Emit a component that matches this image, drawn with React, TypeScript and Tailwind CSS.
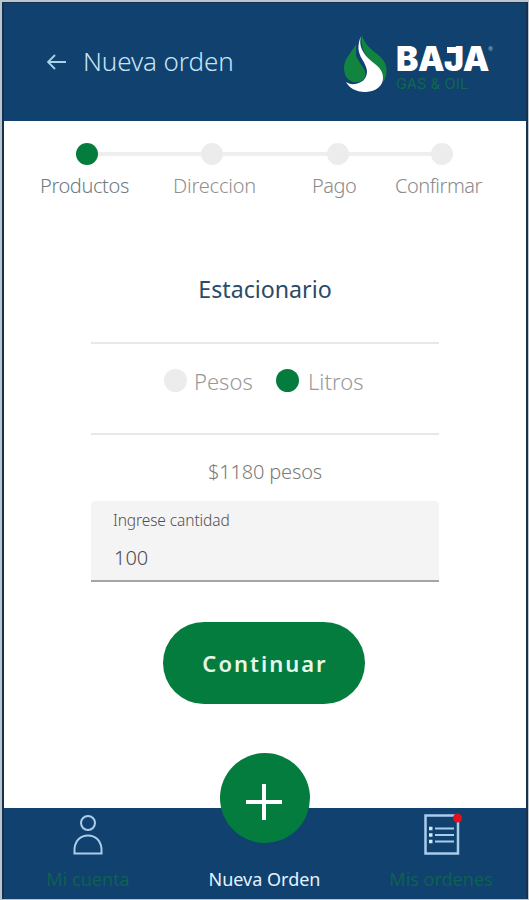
import { useState } from 'react'

type Unit = 'Pesos' | 'Litros'

const steps = [
  { label: 'Productos', labelClass: 'w-[90px] tracking-[-0.4px] text-[#6f7b83]' },
  { label: 'Direccion', labelClass: 'ml-[43px] w-[84px] tracking-[-0.2px] text-[#909090]' },
  { label: 'Pago', labelClass: 'ml-[55px] w-[46px] tracking-[-0.5px] text-[#8b8b8b]' },
  { label: 'Confirmar', labelClass: 'ml-[37px] w-[88px] tracking-[-0.5px] text-[#8b8b8b]' },
]

const units: { name: Unit; className: string }[] = [
  { name: 'Pesos', className: 'w-[112px] gap-[7px]' },
  { name: 'Litros', className: 'w-[92px] gap-[9px]' },
]

function Logo() {
  return (
    <div className="flex">
      <svg className="h-[58px] w-[44px]" fill="none" viewBox="0 0 44 58">
        <path d="M12 9C9 16 0 23 0 33c0 7 3 12 9 14 7 1 12-2 12.500-7C22 33 14 28 12 20Z" fill="#11853f" />
        <path d="M18 0c3 10 9 14 15 19 5 4 9 8 9.500 15 .3 6-1 10-3.500 13 0-12-8-16-14-23-5-6-9-14-7-24Z" fill="#11853f" />
        <path
          d="M17 1c-4 10-3 16 1 23 3 5 5 9 5 13-.5 8-6 11-12 12-4 .5-7-.5-9-2 3 6 11 10.500 20 10 10-.5 17-6 17-14 0-6-3-10-8-14-7-5-12-11-14-17-1-4-1-7 0-11Z"
          fill="#fff"
        />
      </svg>
      <div className="ml-[8px] pt-[6px]">
        <div className="relative h-[36px] w-[93px]">
          <span className="font-['Inter'] text-[33.5px] leading-[36px] font-black tracking-[-0.5px] text-white">
            BAJA
          </span>
          <span className="absolute top-[6px] left-[51px] h-[6px] w-[12px] bg-white" />
          <span className="absolute top-[3px] left-[92px] text-[6px] leading-[10px] text-[#9fc4dc]">®</span>
        </div>
        <div className="mt-[-1px] font-['Inter'] text-[14.5px] leading-[16px] tracking-[0.2px] text-[#11684c]">
          GAS &amp; OIL
        </div>
      </div>
    </div>
  )
}

function Stepper() {
  return (
    <div>
      <div className="flex items-center pt-[22px] pl-[72px]">
        <span className="size-[22px] rounded-full bg-[#047c3d]" />
        <span className="h-[4px] w-[103px] bg-[#efefef]" />
        <span className="size-[22px] rounded-full bg-[#ececec]" />
        <span className="h-[4px] w-[104px] bg-[#efefef]" />
        <span className="size-[22px] rounded-full bg-[#ececec]" />
        <span className="h-[4px] w-[82px] bg-[#efefef]" />
        <span className="size-[22px] rounded-full bg-[#ececec]" />
      </div>
      <div className="mt-[7px] flex pl-[36px] text-[20px] leading-[28px] font-light">
        {steps.map((step) => (
          <span className={`whitespace-nowrap ${step.labelClass}`} key={step.label}>
            {step.label}
          </span>
        ))}
      </div>
    </div>
  )
}

function BottomNav() {
  return (
    <nav className="relative flex h-[91px] bg-[#10416f] text-[18px] leading-[26px] whitespace-nowrap">
      <div className="flex w-[168px] flex-col items-center pt-[6px]">
        <svg className="h-[41px] w-[30px]" fill="none" stroke="#a9cdeb" strokeWidth="2" viewBox="0 0 30 41">
          <circle cx="15" cy="9" r="7" />
          <path d="M1.500 39.500h27v-5C27.500 26 22 21.500 15 21.500S2.500 26 1.500 34.500Z" />
        </svg>
        <span className="mt-[11px] text-[#0d6250]">Mi cuenta</span>
      </div>
      <div className="flex w-[185px] flex-col items-center pt-[58px]">
        <button
          aria-label="Nueva Orden"
          className="absolute -top-[55px] left-[216px] flex size-[90px] items-center justify-center rounded-full bg-[#047c3d]"
          type="button"
        >
          <svg className="mt-[7px] mr-[2px] size-[36px]" stroke="#fff" strokeWidth="4" viewBox="0 0 36 36">
            <path d="M18 0v36M0 18h36" />
          </svg>
        </button>
        <span className="text-[#e4f3ff]">Nueva Orden</span>
      </div>
      <div className="flex w-[168px] flex-col items-center pt-[5px]">
        <svg className="ml-[4px] h-[43px] w-[40px]" fill="none" viewBox="0 0 40 43">
          <rect height="38" stroke="#a9cdeb" strokeWidth="2.500" width="32.500" x="2.500" y="2.500" />
          <path d="M12 15.500h19M12 22h19M12 28.500h19" stroke="#a9cdeb" strokeWidth="2.200" />
          <path d="M6 15.500h3.500M6 22h3.500M6 28.500h3.500" stroke="#d5e9f8" strokeWidth="3.500" />
          <circle cx="34.500" cy="5" fill="#e3101c" r="4.500" />
        </svg>
        <span className="mt-[10px] text-[#0d6250]">Mis ordenes</span>
      </div>
    </nav>
  )
}

export default function App() {
  const [unit, setUnit] = useState<Unit>('Litros')
  const [amount, setAmount] = useState('100')

  return (
    <div className="h-[900px] w-[529px] bg-[#b9c6d0] pt-[2px] pr-px pb-px pl-[2px] font-['Noto_Sans',sans-serif]">
      <div className="flex h-full flex-col border-x-2 border-t border-[#16304d] bg-white">
        <header className="flex h-[118px] shrink-0 items-start bg-[#10416f] pl-[43px]">
          <svg
            className="mt-[49px] h-[20px] w-[20px]"
            fill="none"
            stroke="#a9d3e8"
            strokeWidth="1.800"
            viewBox="0 0 20 20"
          >
            <path d="M19 10H1M8 3l-7 7 7 7" />
          </svg>
          <h1 className="mt-[40px] ml-[16px] w-[150px] text-[26px] leading-[36px] font-light tracking-[-0.1px] whitespace-nowrap text-[#c5e4f5]">
            Nueva orden
          </h1>
          <div className="mt-[32px] ml-[111px]">
            <Logo />
          </div>
        </header>

        <main className="flex grow flex-col">
          <Stepper />
          <h2 className="mt-[72px] text-center text-[23.2px] leading-[34px] text-[#2b4a68]">Estacionario</h2>

          <section className="mx-[87px] mt-[36px] flex h-[93px] items-center border-y-2 border-[#e8e8e8] pb-[16px] pl-[73px]">
            {units.map(({ name, className }) => (
              <button
                className={`flex items-center text-[22px] leading-[32px] font-light text-[#999] ${className}`}
                key={name}
                onClick={() => setUnit(name)}
                type="button"
              >
                <span
                  className={`size-[23px] shrink-0 rounded-full ${unit === name ? 'bg-[#047c3d]' : 'bg-[#ececec]'}`}
                />
                {name}
              </button>
            ))}
          </section>

          <p className="mt-[22px] text-center text-[20px] leading-[30px] font-light tracking-[-0.15px] text-[#7b7b7b]">
            $1180 pesos
          </p>
          <label className="mx-[87px] mt-[14px] flex h-[81px] flex-col rounded-t-[4px] border-b-2 border-[#a5a5a5] bg-[#f4f4f4] pt-[8px] pl-[22px]">
            <span className="text-[15.5px] leading-[22px] font-light tracking-[-0.1px] text-[#505050]">
              Ingrese cantidad
            </span>
            <input
              className="mt-[12px] ml-px h-[30px] w-[280px] bg-transparent text-[20px] font-light text-[#4c4c4c] outline-none"
              onChange={(event) => setAmount(event.target.value)}
              value={amount}
            />
          </label>

          <button
            className="mt-[40px] ml-[159px] h-[82px] w-[202px] rounded-full bg-[#047c3d] pl-[2px] text-[22px] font-semibold tracking-[2px] text-[#e6f8ea]"
            type="button"
          >
            Continuar
          </button>
        </main>

        <BottomNav />
      </div>
    </div>
  )
}
